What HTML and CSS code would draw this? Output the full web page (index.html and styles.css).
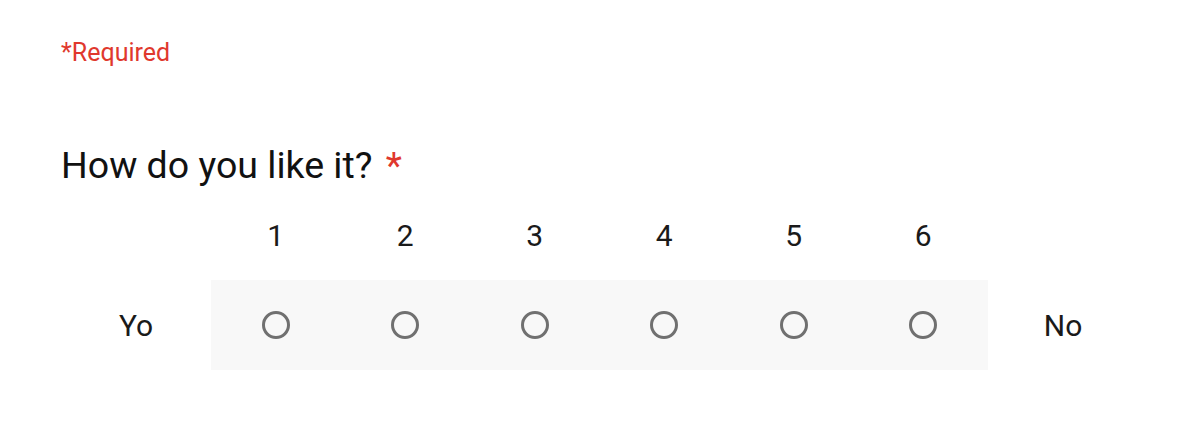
FILE: index.html
```html
<!DOCTYPE html>
<html>
<head>
<meta charset="utf-8">
<link rel="stylesheet" href="styles.css">
</head>
<body>
<div class="form">
  <div class="required">*Required</div>
  <div class="question">How do you like it? <span class="star">*</span></div>
  <div class="scale">
    <div class="nums">
      <div class="cell label"></div>
      <div class="cell">1</div>
      <div class="cell">2</div>
      <div class="cell">3</div>
      <div class="cell">4</div>
      <div class="cell">5</div>
      <div class="cell">6</div>
      <div class="cell label"></div>
    </div>
    <div class="radios">
      <div class="cell label">Yo</div>
      <div class="band">
        <div class="cell"><span class="radio"></span></div>
        <div class="cell"><span class="radio"></span></div>
        <div class="cell"><span class="radio"></span></div>
        <div class="cell"><span class="radio"></span></div>
        <div class="cell"><span class="radio"></span></div>
        <div class="cell"><span class="radio"></span></div>
      </div>
      <div class="cell label">No</div>
    </div>
  </div>
</div>
</body>
</html>
```
FILE: styles.css
```css
html, body {
  margin: 0;
  padding: 0;
  background: #ffffff;
}
body {
  font-family: Roboto, "Noto Sans", Arial, sans-serif;
  color: #202020;
}
.form {
  padding: 38px 0 0 61px;
}
.required {
  color: #e0382d;
  font-size: 25px;
  line-height: 30px;
}
.question {
  margin-top: 75px;
  font-size: 37.5px;
  line-height: 44px;
  color: #111111;
}
.star {
  color: #e0382d;
  margin-left: 4px;
}
.scale {
  margin-top: 28px;
  display: flex;
  flex-direction: column;
  gap: 25px;
}
.nums, .radios {
  display: flex;
}
.nums {
  height: 40px;
  align-items: center;
}
.band {
  display: flex;
  background: #f8f8f8;
  height: 90px;
  align-items: center;
}
.radios {
  align-items: center;
}
.cell {
  width: 129.5px;
  display: flex;
  justify-content: center;
  align-items: center;
  font-size: 30px;
  color: #1a1a1a;
}
.cell.label {
  width: 150px;
}
.radio {
  display: block;
  width: 22px;
  height: 22px;
  border: 3.5px solid #707070;
  border-radius: 50%;
}
```
